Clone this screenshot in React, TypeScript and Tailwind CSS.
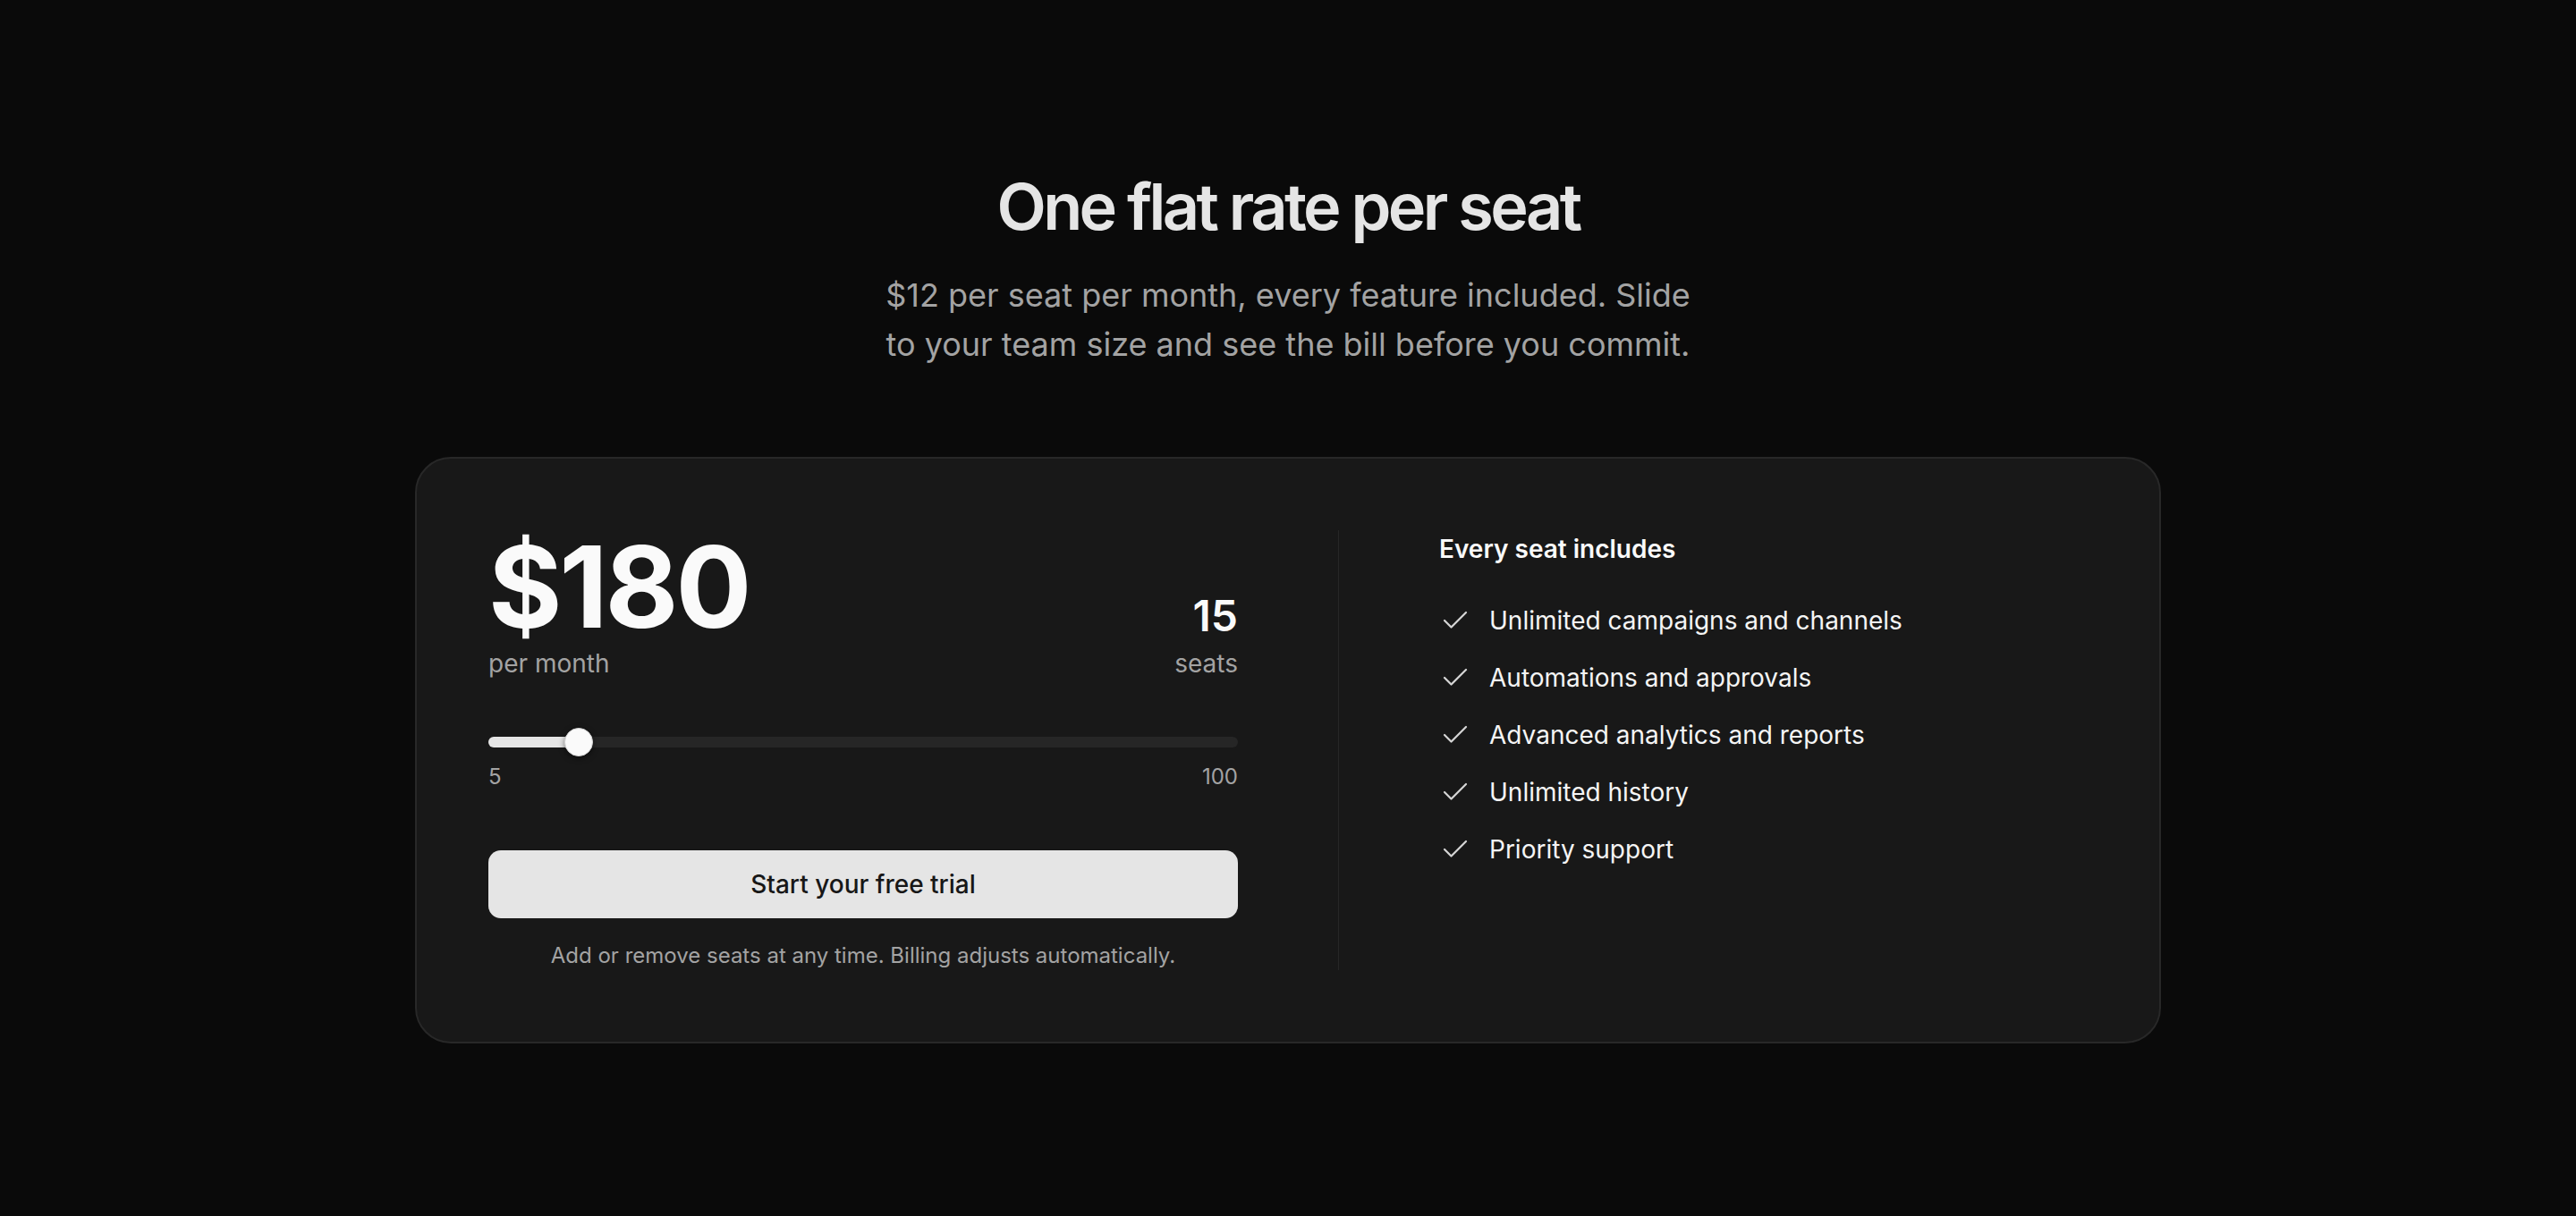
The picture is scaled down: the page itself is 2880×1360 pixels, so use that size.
import { Check } from 'lucide-react';

const PRICE_PER_SEAT = 12;
const MIN_SEATS = 5;
const MAX_SEATS = 100;

const features = [
  'Unlimited campaigns and channels',
  'Automations and approvals',
  'Advanced analytics and reports',
  'Unlimited history',
  'Priority support',
];

function SeatSlider({ seats }: { seats: number }) {
  const pct = (seats - MIN_SEATS) / (MAX_SEATS - MIN_SEATS);
  const thumbLeft = `calc(${pct} * (100% - 32px) + 16px)`;

  return (
    <div>
      <div className="relative h-8 flex items-center">
        <div className="relative w-full h-3 rounded-full bg-[#262626]">
          <div className="absolute left-0 top-0 h-3 rounded-full bg-[#e5e5e5]" style={{ width: thumbLeft }} />
        </div>
        <div
          className="absolute top-0 w-8 h-8 -ml-4 rounded-full bg-[#fafafa] border border-[#d4d4d4] shadow-[0_2px_6px_rgba(0,0,0,0.5)]"
          style={{ left: thumbLeft }}
        />
      </div>
      <div className="mt-[5px] flex justify-between text-[24px] leading-[36px] text-[#a3a3a3]">
        <span>{MIN_SEATS}</span>
        <span>{MAX_SEATS}</span>
      </div>
    </div>
  );
}

export default function App() {
  const seats = 15;
  const total = seats * PRICE_PER_SEAT;

  return (
    <div className="min-h-screen bg-[#0a0a0a] font-[Inter,sans-serif] flex flex-col items-center pt-[195px] pb-[193px]">
      <h1 className="text-[72px] leading-none font-semibold tracking-tighter text-[#e5e5e5]">
        One flat rate per seat
      </h1>
      <p className="mt-9 max-w-[910px] text-center text-[36px] leading-[55px] text-[#a3a3a3]">
        $12 per seat per month, every feature included. Slide to your team size and see the bill before you commit.
      </p>

      <div className="mt-[98px] w-[1952px] rounded-[40px] border-2 border-[#282828] bg-[#181818] p-20">
        <div className="grid grid-cols-2 gap-28">
          <div>
            <div className="flex items-end justify-between">
              <div>
                <div className="text-[126px] leading-[132px] -mt-[3px] font-bold tracking-tight text-[#fafafa]">${total}</div>
                <div className="-mt-[1px] text-[28px] leading-[42px] text-[#a3a3a3]">per month</div>
              </div>
              <div className="text-right">
                <div className="text-[48px] leading-none font-semibold text-[#fafafa]">{seats}</div>
                <div className="mt-2 text-[28px] leading-[42px] text-[#a3a3a3]">seats</div>
              </div>
            </div>

            <div className="mt-[51px]">
              <SeatSlider seats={seats} />
            </div>

            <button className="mt-16 w-full h-[76px] rounded-[14px] bg-[#e5e5e5] text-[28px] font-medium text-[#171717]">
              Start your free trial
            </button>
            <p className="mt-[26px] text-center text-[24px] leading-[32px] text-[#a3a3a3]">
              Add or remove seats at any time. Billing adjusts automatically.
            </p>
          </div>

          <div className="border-l border-[#262626] pl-28">
            <h3 className="text-[28px] leading-[42px] font-semibold text-[#fafafa]">Every seat includes</h3>
            <ul className="mt-[38px] flex flex-col gap-[22px]">
              {features.map((f) => (
                <li key={f} className="flex items-center gap-5 text-[28px] leading-[42px] text-[#f5f5f5]">
                  <Check className="w-9 h-9 text-[#d4d4d4]" strokeWidth={1.5} />
                  <span>{f}</span>
                </li>
              ))}
            </ul>
          </div>
        </div>
      </div>
    </div>
  );
}
